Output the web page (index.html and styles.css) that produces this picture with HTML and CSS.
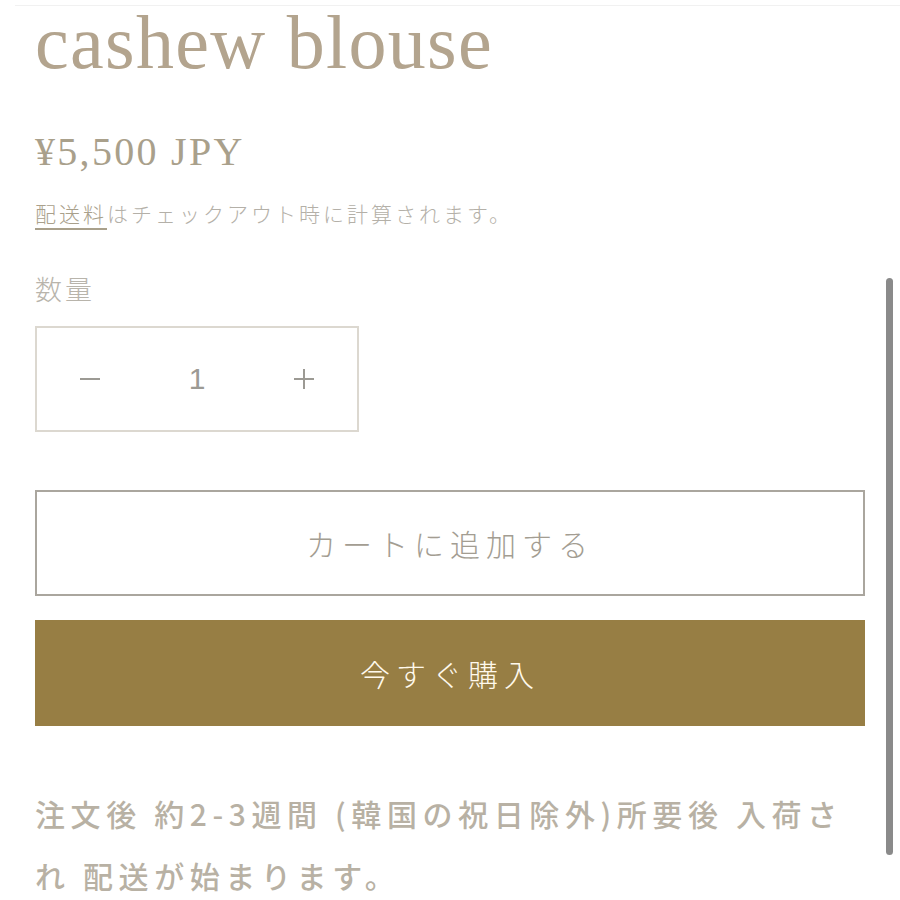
FILE: index.html
```html
<!DOCTYPE html>
<html lang="ja">
<head>
<meta charset="utf-8">
<title>cashew blouse</title>
<link rel="stylesheet" href="styles.css">
</head>
<body>
<div class="topline"></div>
<main class="product">
  <h1 class="title">cashew blouse</h1>
  <div class="price">¥5,500 JPY</div>
  <p class="ship"><span class="ship-link">配送料</span>はチェックアウト時に計算されます。</p>
  <div class="qty-label">数量</div>
  <div class="qty">
    <span class="qty-btn" aria-label="数量を減らす"><svg class="qty-icon" viewBox="0 0 22 22"><path d="M1 11H21" /></svg></span>
    <span class="qty-val">1</span>
    <span class="qty-btn" aria-label="数量を増やす"><svg class="qty-icon" viewBox="0 0 22 22"><path d="M1 11H21M11 1V21" /></svg></span>
  </div>
  <button class="btn btn-cart">カートに追加する</button>
  <button class="btn btn-buy">今すぐ購入</button>
  <p class="note">注文後 約2-3週間 (韓国の祝日除外)所要後 入荷され 配送が始まります。</p>
</main>
<div class="scrollbar"></div>
</body>
</html>
```

FILE: styles.css
```css
html, body {
  margin: 0;
  padding: 0;
  background: #ffffff;
}
body {
  width: 900px;
  height: 900px;
  overflow: hidden;
  position: relative;
}
.topline {
  height: 5px;
  border-bottom: 1px solid #f1f1f1;
  margin-left: 15px;
}
.product {
  padding: 0 35px;
  display: flex;
  flex-direction: column;
  align-items: flex-start;
}
.title {
  margin: 0;
  font-family: "Liberation Serif", "DejaVu Serif", serif;
  font-weight: normal;
  font-size: 76px;
  line-height: 76px;
  color: #b3a48e;
  letter-spacing: 1.3px;
  position: relative;
  top: -2px;
}
.price {
  margin-top: 50px;
  font-family: "Liberation Serif", serif;
  font-size: 40px;
  line-height: 40px;
  color: #a9a08b;
  letter-spacing: 2.3px;
}
.ship {
  margin: 26px 0 0;
  font-family: "Noto Sans CJK JP", sans-serif;
  font-weight: 300;
  font-size: 21px;
  line-height: 30px;
  letter-spacing: 3px;
  color: #b4b0a8;
}
.ship-link {
  color: #a9a08b;
  border-bottom: 2px solid #a9a08b;
}
.qty-label {
  margin-top: 43px;
  font-family: "Noto Sans CJK JP", sans-serif;
  font-weight: 300;
  font-size: 27px;
  line-height: 36px;
  letter-spacing: 3px;
  color: #b8b4ab;
}
.qty {
  margin-top: 19px;
  width: 320px;
  height: 102px;
  border: 2px solid #dcd8d0;
  display: grid;
  grid-template-columns: 1fr 1fr 1fr;
  align-items: center;
  justify-items: center;
  font-family: "Liberation Sans", Arial, sans-serif;
  font-size: 30px;
  color: #9c9a94;
}
.qty-btn {
  display: flex;
}
.qty-icon {
  width: 22px;
  height: 22px;
  fill: none;
  stroke: #9c9a94;
  stroke-width: 2;
}
.btn {
  display: flex;
  align-items: center;
  justify-content: center;
  width: 830px;
  height: 106px;
  margin: 0;
  padding: 0;
  font-family: "Noto Sans CJK JP", sans-serif;
  font-weight: 300;
  font-size: 30px;
  letter-spacing: 6px;
  box-sizing: border-box;
}
.btn-cart {
  margin-top: 58px;
  background: #ffffff;
  border: 2px solid #aaa69e;
  color: #a39d92;
}
.btn-buy {
  margin-top: 24px;
  background: #977e44;
  border: none;
  color: #fff9ec;
}
.note {
  margin: 56px 0 0;
  width: 812px;
  font-family: "Noto Sans CJK JP", sans-serif;
  font-weight: 500;
  font-size: 30px;
  line-height: 62px;
  letter-spacing: 5.6px;
  color: #b8b1a4;
}
.scrollbar {
  position: absolute;
  left: 886px;
  top: 278px;
  width: 7px;
  height: 577px;
  border-radius: 4px;
  background: #8a8a8a;
}
```
